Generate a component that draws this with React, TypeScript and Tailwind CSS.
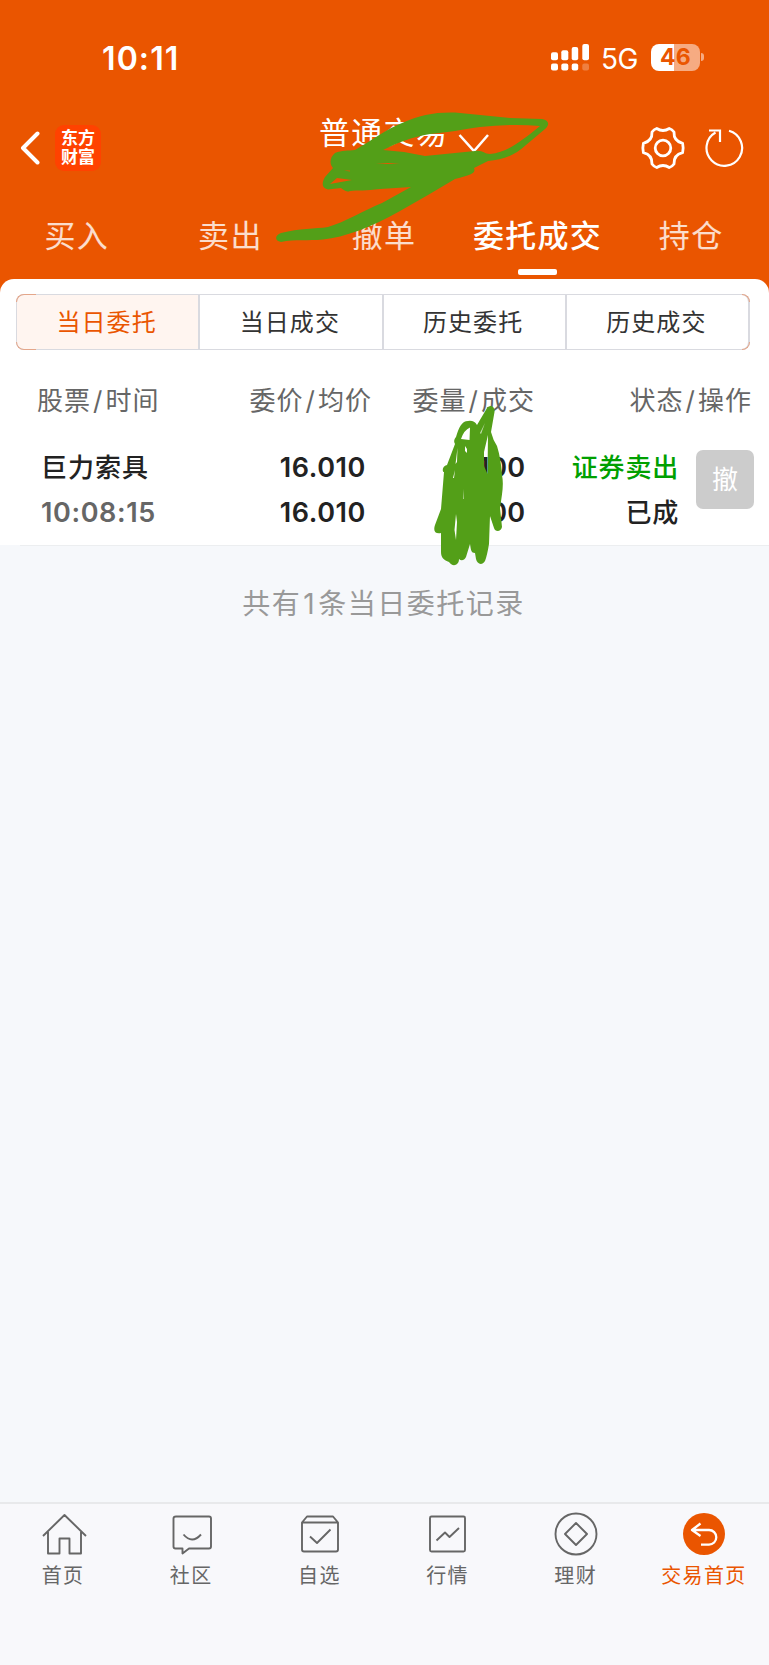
import type { ReactNode } from 'react'

const tabs = ['买入', '卖出', '撤单', '委托成交', '持仓']
const segments = ['当日委托', '当日成交', '历史委托', '历史成交']

function StatusBar() {
  return (
    <div className="flex h-[116px] items-start pt-[44px] pl-[102px]">
      <div className="h-7 w-[449px] text-[32px] leading-[29px] font-semibold tracking-[1.100px]">10:11</div>
      <svg className="h-7 w-[39px]" viewBox="0 0 39 28" fill="#fff">
        <rect x="0" y="8.300" width="7" height="8" rx="2" />
        <rect x="10.300" y="6.300" width="7" height="10" rx="2" />
        <rect x="20.700" y="3" width="6.500" height="13.300" rx="2" />
        <rect x="31.300" y="0" width="6.700" height="16.300" rx="2" />
        <rect x="0" y="19.500" width="7" height="7" rx="2" />
        <rect x="10.300" y="19.500" width="7" height="7" rx="2" />
        <rect x="20.700" y="19.500" width="6.500" height="7" rx="2" />
        <rect x="31.300" y="19.500" width="6.700" height="7" rx="2" opacity=".25" />
      </svg>
      <div className="ml-[11px] h-7 w-[50px] text-[28px] leading-[30px] tracking-[-0.5px]">5G</div>
      <div className="flex h-[27px] w-[49px] items-center justify-center rounded-[8px] bg-linear-to-r from-white from-47% to-[#f6ab82] to-47% text-[23px] font-bold tracking-[0.3px] text-[#ea5500]">
        46
      </div>
      <div className="mt-[9px] ml-[1px] h-2 w-[3px] rounded-r-full bg-[#f6ab82]" />
    </div>
  )
}

function TitleBar() {
  return (
    <div className="flex h-[90px] items-start">
      <svg className="mt-[14px] ml-[16px] h-9 w-6" viewBox="0 0 24 36" fill="none" stroke="#fff" strokeWidth="4" strokeLinecap="round" strokeLinejoin="round">
        <path d="M21.500 3.500 7 18 21.500 32.500" />
      </svg>
      <div className="mt-[9px] ml-[15px] flex h-[46px] w-[46px] flex-col items-center justify-center rounded-[9px] bg-[#ff4200] text-[17px] leading-[19px] font-bold">
        <span>东方</span>
        <span>财富</span>
      </div>
      <div className="ml-[218px] h-8 w-[139px] text-[31px] leading-[34px] tracking-[1.300px] whitespace-nowrap">普通交易</div>
      <svg className="mt-[17px] h-5 w-8" viewBox="0 0 32 20" fill="none" stroke="#fff" strokeWidth="2.500">
        <path d="M1.500 2 16 18 30 2" />
      </svg>
      <svg className="mt-[8px] ml-[149px] h-12 w-12" viewBox="0 0 48 48" fill="none" stroke="#fff" strokeWidth="2.800" strokeLinejoin="round">
        <path d="M17.700 4.500Q24 8.500 30.300 4.500Q33 5.300 35 8Q34.500 17 43.600 19.300Q44.700 24 43.600 28.700Q34.500 31 35 40Q33 42.700 30.300 43.500Q24 39.500 17.700 43.500Q15 42.700 13 40Q13.500 31 4.400 28.700Q3.300 24 4.400 19.300Q13.500 17 13 8Q15 5.300 17.700 4.500Z" />
        <circle cx="24" cy="24" r="7.800" />
      </svg>
      <svg className="mt-[12px] ml-[18px] h-10 w-10" viewBox="0 0 40 40" fill="none" stroke="#fff" strokeWidth="2.200">
        <path d="M24 2.800A17.800 17.800 0 1 1 10.500 4.500M4 2.500H15V14" />
      </svg>
    </div>
  )
}

function Slash({ left, right }: { left: string; right: string }) {
  return (
    <>
      {left}
      <span className="mx-[2px]">/</span>
      {right}
    </>
  )
}

function NavItem({ label, active, children }: { label: string; active?: boolean; children: ReactNode }) {
  return (
    <div className={`flex flex-1 flex-col items-center ${active ? 'text-[#ea5500]' : 'text-[#666]'}`}>
      <svg className="mr-[1px] h-12 w-12" viewBox="0 0 48 48" fill="none" stroke="currentColor" strokeWidth="1.900" strokeLinejoin="round">
        {children}
      </svg>
      <span className="mt-[5px] mr-[2px] text-[20px] leading-[26px] tracking-[1.400px]">{label}</span>
    </div>
  )
}

// Freehand marker strokes that cover the account name and the volumes
function Scribbles() {
  return (
    <svg className="pointer-events-none absolute top-0 left-0 h-[600px] w-[769px]" viewBox="0 0 769 600" fill="#539f18" fillRule="evenodd">
      <path d="M355 150C372 140 387 129 402 123C420 115 434 112 455 112.500L510 118L542 119C549 120 550 125 545 129L526 145C514 156 502 160 488 161L474 168C476 173 472 175 455 179L428 195L400 211C370 228 345 237 323 239.500C308 241 295 239 281 242C274 241 275 235 281 233C300 228 315 229 328 227C345 222 365 210 382 203L411 187L380 189C366 191 357 190 350 191C346 193 343 189 341 188L328 189.500C321 188 322 182 325 177L333 168C329 164 330 157 335 153C342 150 348 151 355 150ZM383 150L404 152L425 156L475 151C483 150 484 154 490 154C508 152 520 142 540 126C520 124 500 125 480 127C460 130 450 132 430 134C412 137 399 142 383 150ZM330 184L337 178L352 180L341 182ZM344 170.500L350 170.500L350 171.500ZM376 163L400 163L388 164Z" />
      <path d="M487 408C490 404 495 406 494.500 412L491 432Q493 440 497 446Q501 459 502 475C504 485 502 495 500 508L502 527C501 532 495 532 494 528L490 516L489 544Q487 556 485 561C482 566 477 564 476 559L475 553C471 553 471 550 470 544L466 557C464 561 461 561 459 559C459 566 452 567 449 562C444 560 441 558 441 552L441 533C435 534 433 531 435 525L441 509L444 472C442 472 442 466 447 465L455 444C453 441 455 438 456 437C459 427 462 421 468 421Q474 420 477 425ZM470 427.500Q464 430 461 439L469.500 440ZM457.500 448L457 462L455.500 464ZM465 446L465 451L467 453L467 449ZM455 470L453 478L454 478ZM464 489L463 499L463.500 499ZM456 514L454.500 530L456 540L457 522ZM488 435L484 452L484 466L487.500 474Z" />
      <path d="M485 423L480 433L481 434Z" fill="#c6dfb4" />
    </svg>
  )
}

export default function App() {
  return (
    <div className="relative flex h-[1665px] w-[769px] flex-col bg-[#f6f8fb] font-['Inter','Noto_Sans_CJK_SC',sans-serif]">
      <header className="h-[293px] bg-[#ea5500] text-white">
        <StatusBar />
        <TitleBar />
        <div className="mr-[1px] flex h-[73px] pt-[12px]">
          {tabs.map((tab) => (
            <div key={tab} className="flex flex-1 flex-col items-center">
              <span className={`h-9 text-[31px] leading-9 tracking-[1.300px] ${tab === '委托成交' ? 'font-medium' : 'text-white/80'}`}>{tab}</span>
              {tab === '委托成交' && <div className="mt-[15px] h-[6px] w-[39px] rounded-[2px] bg-white" />}
            </div>
          ))}
        </div>
      </header>

      <main className="-mt-[14px] h-[266px] rounded-t-[14px] bg-white">
        <div className="relative ml-4 flex h-[71px] w-[734px] pt-[15px]">
          {segments.map((item, i) => (
            <div
              key={item}
              className={`flex flex-1 items-center justify-center border-y-[1.500px] border-[#d9dae0] pt-[2px] pr-[2px] text-[24px] tracking-[1.100px] ${
                i === 0 ? 'rounded-l-[8px] border-r-2 border-l bg-[#fff5f0] text-[#ea5500]' : 'border-r-2 text-[#333]'
              } ${i === 3 ? 'rounded-r-[8px]' : ''}`}
            >
              {item}
            </div>
          ))}
          {/* Tinted corners */}
          <span className="absolute top-[15px] left-0 h-2 w-5 rounded-tl-[8px] border-t border-l border-[#e4a68a]" />
          <span className="absolute bottom-0 left-0 h-2 w-5 rounded-bl-[8px] border-b border-l border-[#e4a68a]" />
          <span className="absolute top-[15px] right-0 h-2 w-2 rounded-tr-[8px] border-t border-r border-[#e4a68a]" />
          <span className="absolute right-0 bottom-0 h-2 w-2 rounded-br-[8px] border-r border-b border-[#e4a68a]" />
        </div>

        {/* Column titles */}
        <div className="mt-[32px] flex h-9 text-right text-[26px] leading-[37px] tracking-[1px] text-[#666]">
          <div className="w-[159.500px]"><Slash left="股票" right="时间" /></div>
          <div className="w-[212.500px]"><Slash left="委价" right="均价" /></div>
          <div className="w-[163px]"><Slash left="委量" right="成交" /></div>
          <div className="w-[217px]"><Slash left="状态" right="操作" /></div>
        </div>

        {/* Order row */}
        <div className="mt-[27px] flex text-right text-[27px] leading-[45px] font-semibold text-[#222]">
          <div className="w-[160px] pl-[41px] text-left">
            <div className="h-[45px] text-[26px] leading-[45px] font-medium tracking-[1px]">巨力索具</div>
            <div className="tracking-[0.600px] text-[#666]">10:08:15</div>
          </div>
          <div className="w-[206px] tracking-[0.600px]">
            <div>16.010</div>
            <div>16.010</div>
          </div>
          <div className="w-[159px]">
            <div>100</div>
            <div>100</div>
          </div>
          <div className="w-[154px] text-[26px] font-medium tracking-[0.8px]">
            <div className="text-[#00a000]">证券卖出</div>
            <div>已成</div>
          </div>
          <div className="mt-[5px] ml-[17px] h-[59px] w-[58px] rounded-[7px] bg-[#ccc] text-center text-[26px] leading-[60px] font-normal text-white">撤</div>
        </div>
      </main>
      <div className="ml-5 h-px bg-[#eceef0]" />
      <p className="mt-[38px] mr-[2px] text-center text-[28px] leading-[41px] tracking-[1.500px] text-[#999]">
        共有<span className="mx-[2px]">1</span>条当日委托记录
      </p>

      <nav className="mt-auto flex h-[163px] border-t-2 border-[#e8e9eb] bg-[#f8f8fb] pt-[6px]">
        <NavItem label="首页">
          <path d="M3 26 24.500 5 46 26M8 22V43.500H19.500V28.500H29.500V43.500H41V22" />
        </NavItem>
        <NavItem label="社区">
          <path d="M8 6.500H41Q43 6.500 43 8.500V36.500Q43 38.500 41 38.500H21L14.500 43.500V38.500H7.500Q5.500 38.500 5.500 36.500V8.500Q5.500 6.500 8 6.500Z" />
          <path d="M15.500 24.500Q24 34.500 33 24.500" />
        </NavItem>
        <NavItem label="自选">
          <path d="M6 12.500H42V39.500Q42 41.500 40 41.500H8Q6 41.500 6 39.500ZM6 12.500 11 6.500H37L42 12.500M14 26.500 21 33 34.500 19.500" />
        </NavItem>
        <NavItem label="行情">
          <rect x="6" y="6.500" width="35" height="35" rx="1.500" />
          <path d="M12.500 30.500 21 22.500 25.500 27 35 18" />
        </NavItem>
        <NavItem label="理财">
          <circle cx="24" cy="24" r="20.500" />
          <path d="M24 13 35 24 24 35 13 24Z" />
        </NavItem>
        <NavItem label="交易首页" active>
          <circle cx="24" cy="24" r="21" fill="currentColor" stroke="none" />
          <path stroke="#fff" strokeWidth="2.300" d="M20.500 13.500 12 20 20.500 26M12 20H29A7.300 7.300 0 0 1 29 34.600H21" />
        </NavItem>
      </nav>
      <Scribbles />
    </div>
  )
}
